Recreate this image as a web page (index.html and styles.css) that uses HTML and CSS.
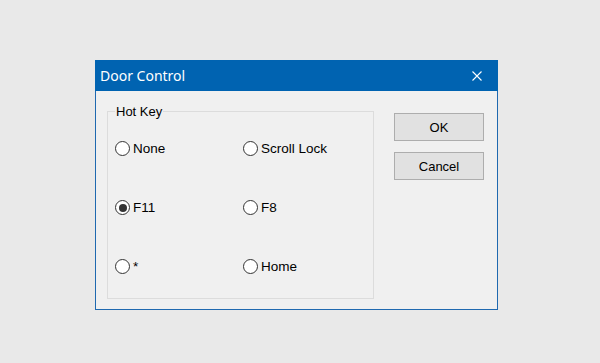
FILE: index.html
```html
<!DOCTYPE html>
<html lang="en">
<head>
    <meta charset="UTF-8">
    <meta name="viewport" content="width=device-width, initial-scale=1.0">
    <title>Door Control</title>
    <link rel="stylesheet" href="styles.css">
</head>
<body>
    <div class="window">
        <div class="titlebar">
            <span class="title">Door Control</span>
            <svg class="close" width="10" height="10" viewBox="0 0 10 10">
                <path d="M0.5 0.5 L9.5 9.5 M9.5 0.5 L0.5 9.5" stroke="#fff" stroke-width="1.1" fill="none"/>
            </svg>
        </div>

        <div class="content">
            <fieldset class="group">
                <legend>Hot Key</legend>
                <div class="options">
                    <label class="radio"><span class="dot"></span>None</label>
                    <label class="radio"><span class="dot"></span>Scroll Lock</label>
                    <label class="radio"><span class="dot checked"></span>F11</label>
                    <label class="radio"><span class="dot"></span>F8</label>
                    <label class="radio"><span class="dot"></span>*</label>
                    <label class="radio"><span class="dot"></span>Home</label>
                </div>
            </fieldset>

            <div class="buttons">
                <button class="btn">OK</button>
                <button class="btn">Cancel</button>
            </div>
        </div>
    </div>
</body>
</html>
```

FILE: styles.css
```css
body {
    margin: 0;
    padding: 60px 0 0 95px;
    background-color: #e9e9e9;
    font-family: "Liberation Sans", Arial, sans-serif;
    font-size: 13px;
    color: #000;
}
.window {
    width: 403px;
    height: 250px;
    box-sizing: border-box;
    border: 1px solid #1f69b0;
    border-top: none;
    background-color: #f0f0f0;
}
.titlebar {
    height: 31px;
    margin: 0 -1px;
    background-color: #0063b1;
    display: flex;
    align-items: center;
    padding-left: 5px;
}
.title {
    flex: 1;
    font-family: "Noto Sans", sans-serif;
    font-size: 14px;
    color: #fff;
}
.close {
    margin-right: 16px;
}
.content {
    display: flex;
    align-items: flex-start;
    padding: 13px 0 0 11px;
}
.group {
    margin: 0;
    width: 267px;
    height: 195px;
    box-sizing: border-box;
    padding: 0 0 0 7px;
    border: 1px solid #dcdcdc;
}
.group legend {
    padding: 0 1px;
    margin-left: 0;
    line-height: 15px;
}
.options {
    display: grid;
    grid-template-columns: 128px auto;
    row-gap: 44px;
    margin-top: 22px;
}
.radio {
    display: flex;
    align-items: center;
    height: 15px;
    line-height: 15px;
    font-size: 13.5px;
}
.dot {
    width: 15px;
    height: 15px;
    box-sizing: border-box;
    border: 1px solid #333;
    border-radius: 50%;
    background-color: #fff;
    margin-right: 3px;
    display: flex;
    align-items: center;
    justify-content: center;
}
.dot.checked::after {
    content: "";
    width: 8px;
    height: 8px;
    border-radius: 50%;
    background-color: #333;
}
.buttons {
    display: flex;
    flex-direction: column;
    gap: 11px;
    margin: 9px 0 0 20px;
}
.btn {
    width: 90px;
    height: 28px;
    padding: 0;
    background-color: #e1e1e1;
    border: 1px solid #adadad;
    border-radius: 0;
    font-family: "Liberation Sans", Arial, sans-serif;
    font-size: 13px;
    color: #000;
}
```
